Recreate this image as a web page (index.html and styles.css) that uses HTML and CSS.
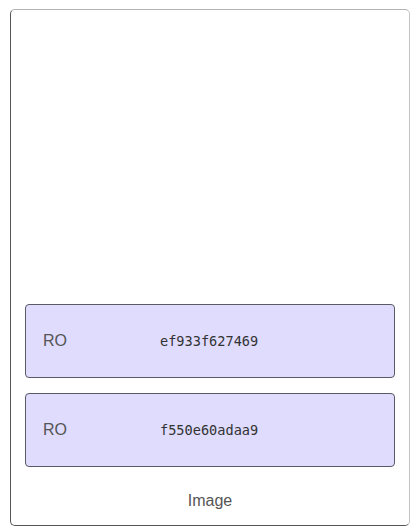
FILE: index.html
```html
<!DOCTYPE html>
<html>
<head>
<meta charset="utf-8">
<link rel="stylesheet" href="styles.css">
</head>
<body>
<div class="frame">
  <div class="canvas"></div>
  <div class="rows">
    <div class="row"><span class="label">RO</span><span class="hash">ef933f627469</span></div>
    <div class="row"><span class="label">RO</span><span class="hash">f550e60adaa9</span></div>
  </div>
  <div class="caption">Image</div>
</div>
</body>
</html>
```
FILE: styles.css
```css
html, body {
  margin: 0;
  padding: 0;
  background: #ffffff;
}
body {
  padding: 9px 10px;
  font-family: "Liberation Sans", Arial, sans-serif;
}
.frame {
  box-sizing: border-box;
  width: 400px;
  height: 517px;
  border: 1px solid #555;
  border-top-color: #b4b4b4;
  border-right-color: #c4c4c4;
  border-radius: 5px;
  display: flex;
  flex-direction: column;
  padding: 0 14px 14px;
}
.canvas {
  flex: 1;
}
.rows {
  display: flex;
  flex-direction: column;
  gap: 15px;
}
.row {
  box-sizing: border-box;
  height: 74px;
  background: #dfdcfd;
  border: 1px solid #5a5a66;
  border-radius: 4px;
  display: flex;
  align-items: center;
  padding-left: 17px;
}
.label {
  width: 117px;
  font-size: 16px;
  color: #555;
}
.hash {
  font-family: "DejaVu Sans Mono", monospace;
  font-size: 13.6px;
  color: #333;
}
.caption {
  margin-top: 25px;
  margin-bottom: 1px;
  text-align: center;
  font-size: 16px;
  line-height: 18px;
  color: #555;
}
```
